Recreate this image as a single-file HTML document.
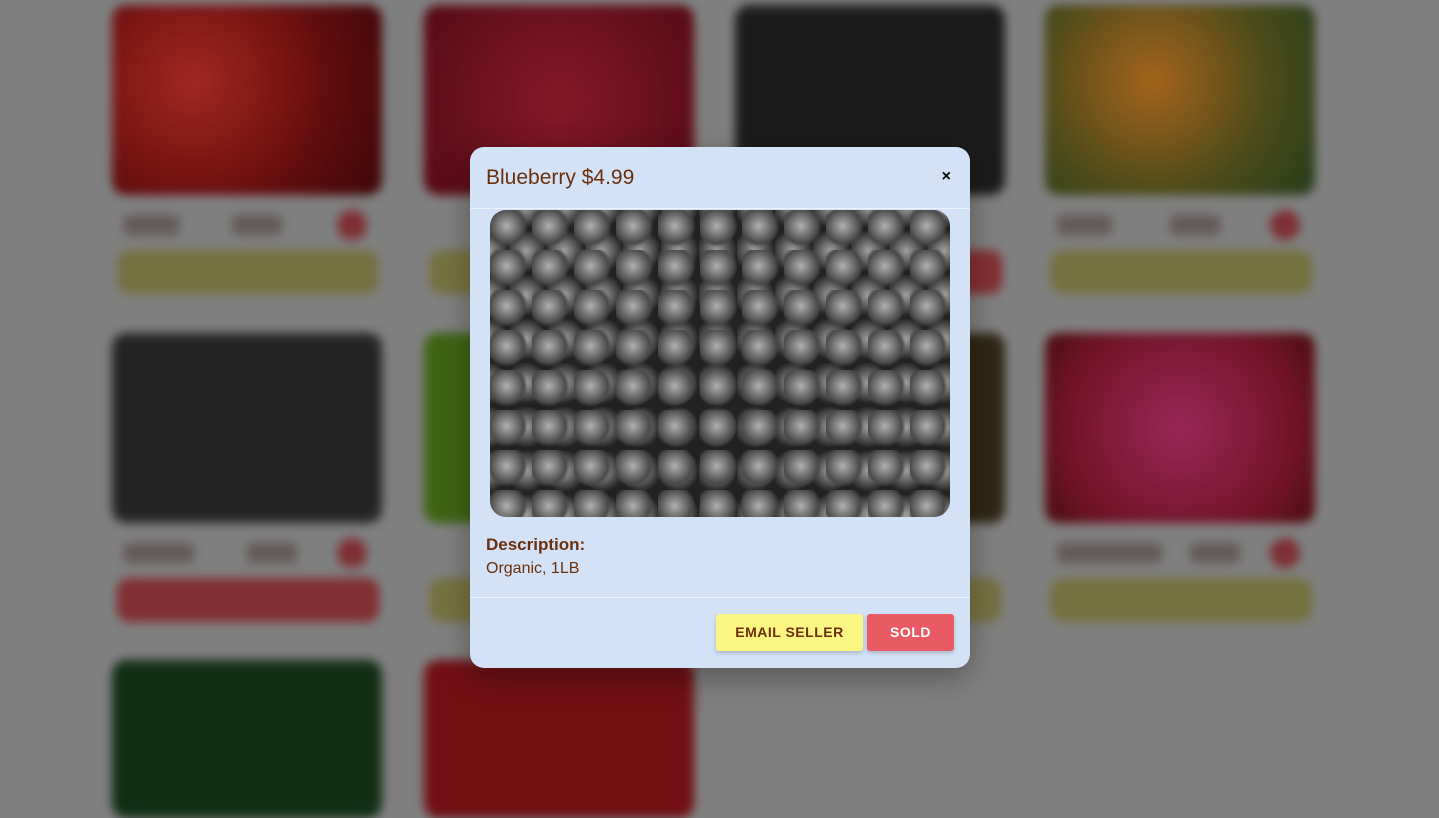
<!DOCTYPE html><html style="overflow:hidden;height:818px;background:#9c9c9c"><head><style>
body{margin:0;width:1439px;height:818px;overflow:hidden;background:#9c9c9c;font-family:"Liberation Sans",sans-serif;position:relative}
.bg{position:absolute;inset:0;filter:blur(5px)}
.card{position:absolute;width:270px}
.img{height:190px;border-radius:14px}
.nm{position:absolute;top:210px;height:20px;background:#6b5b55;border-radius:4px;opacity:.7}
.btn{position:absolute;top:245px;left:5px;width:262px;height:44px;border-radius:12px;background:#8f8b50}
.dot{position:absolute;top:205px;left:225px;width:30px;height:30px;border-radius:50%;background:#9b3a3e}
.overlay{position:fixed;left:0;top:0;width:100%;height:100%;background:rgba(0,0,0,.18)}
.modal{position:absolute;left:470px;top:147px;width:500px;height:521px;background:#d4e2f7;border-radius:14px;box-shadow:0 10px 30px rgba(0,0,0,.3);font-family:"Liberation Sans",sans-serif;color:#6b2f0b}
.hd{height:61px;border-bottom:1px solid #eef3fb;position:relative}
.hd h1{margin:0;position:absolute;left:16px;top:19px;font-size:21px;font-weight:normal}
.x{position:absolute;right:19px;top:21px;color:#000;font-size:16px;font-weight:bold}
.pic{position:absolute;left:20px;top:63px;width:460px;height:307px;border-radius:16px;background-color:#2a2a2a;
background-image:radial-gradient(circle at 40% 40%,#b0b0b0 0,#7a7a7a 9px,#4a4a4a 17px,rgba(30,30,30,0) 21px),radial-gradient(circle at 45% 45%,#a0a0a0 0,#6a6a6a 9px,#3a3a3a 17px,#222 21px);background-size:42px 40px,38px 44px;background-position:0 0,19px 21px}
.d1{position:absolute;left:16px;top:388px;font-weight:bold;font-size:17px}
.d2{position:absolute;left:16px;top:413px;font-size:16px}
.ft{position:absolute;left:0;right:0;top:450px;border-top:1px solid #eef3fb}
.b{position:absolute;top:467px;height:37px;font-weight:bold;font-size:14px;line-height:37px;text-align:center;border-radius:3px;box-shadow:0 2px 4px rgba(0,0,0,.2);letter-spacing:.5px}
</style></head><body>
<div class="bg">
<div class="card" style="left:112px;top:5px"><div class="img" style="background:radial-gradient(circle at 30% 40%,#c5302a,#7a1010 60%,#4a0a0a)"></div><div class="nm" style="left:12px;width:55px"></div><div class="nm" style="left:120px;width:50px"></div><div class="dot"></div><div class="btn"></div></div>
<div class="card" style="left:424px;top:5px"><div class="img" style="background:radial-gradient(circle,#a02030,#6a0c18)"></div><div class="btn"></div></div>
<div class="card" style="left:735px;top:5px"><div class="img" style="background:#222"></div><div class="btn" style="background:#a0393e"></div></div>
<div class="card" style="left:1045px;top:5px"><div class="img" style="background:radial-gradient(circle at 40% 40%,#c87a20,#5a5a20 60%,#2e4a20)"></div><div class="nm" style="left:12px;width:55px"></div><div class="nm" style="left:125px;width:50px"></div><div class="dot"></div><div class="btn"></div></div>
<div class="card" style="left:112px;top:333px"><div class="img" style="background:#2d2d2d"></div><div class="nm" style="left:12px;width:70px"></div><div class="nm" style="left:135px;width:50px"></div><div class="dot"></div><div class="btn" style="background:#a0393e"></div></div>
<div class="card" style="left:424px;top:333px"><div class="img" style="background:#4a7a18"></div><div class="btn"></div></div>
<div class="card" style="left:735px;top:333px"><div class="img" style="background:#3a3018"></div><div class="btn"></div></div>
<div class="card" style="left:1045px;top:333px"><div class="img" style="background:radial-gradient(circle at 50% 50%,#b8306a,#8a1830 70%,#5a1010)"></div><div class="nm" style="left:12px;width:105px"></div><div class="nm" style="left:145px;width:50px"></div><div class="dot"></div><div class="btn"></div></div>
<div class="card" style="left:112px;top:660px"><div class="img" style="height:158px;background:#143a18"></div></div>
<div class="card" style="left:424px;top:660px"><div class="img" style="height:158px;background:#8a1418"></div></div>
</div>
<div class="overlay"></div>
<div class="modal">
<div class="hd"><h1>Blueberry $4.99</h1><span class="x">×</span></div>
<div class="pic"></div>
<div class="d1">Description:</div>
<div class="d2">Organic, 1LB</div>
<div class="ft"></div>
<div class="b" style="left:246px;width:147px;background:#fbf584">EMAIL SELLER</div>
<div class="b" style="left:397px;width:87px;background:#e95b64;color:#fff">SOLD</div>
</div>
</body></html>
